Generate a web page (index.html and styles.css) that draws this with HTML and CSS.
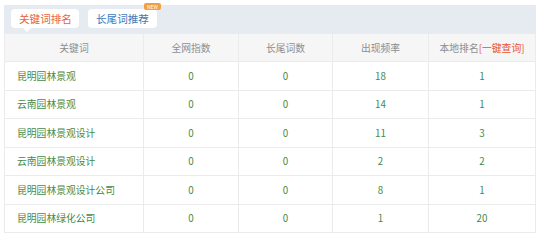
FILE: index.html
```html
<!DOCTYPE html>
<html lang="zh">
<head>
<meta charset="utf-8">
<link rel="stylesheet" href="styles.css">
</head>
<body>
<div class="panel">
  <div class="tabs">
    <span class="tab active">关键词排名</span>
    <span class="tab blue">长尾词推荐<span class="badge">NEW</span></span>
  </div>
  <table class="grid">
    <thead>
      <tr>
        <th class="c1">关键词</th>
        <th class="c2">全网指数</th>
        <th class="c3">长尾词数</th>
        <th class="c4">出现频率</th>
        <th class="c5">本地排名<span class="query">[一键查询]</span></th>
      </tr>
    </thead>
    <tbody>
      <tr><td class="kw">昆明园林景观</td><td>0</td><td>0</td><td>18</td><td>1</td></tr>
      <tr><td class="kw">云南园林景观</td><td>0</td><td>0</td><td>14</td><td>1</td></tr>
      <tr><td class="kw">昆明园林景观设计</td><td>0</td><td>0</td><td>11</td><td>3</td></tr>
      <tr><td class="kw">云南园林景观设计</td><td>0</td><td>0</td><td>2</td><td>2</td></tr>
      <tr><td class="kw">昆明园林景观设计公司</td><td>0</td><td>0</td><td>8</td><td>1</td></tr>
      <tr><td class="kw">昆明园林绿化公司</td><td>0</td><td>0</td><td>1</td><td>20</td></tr>
    </tbody>
  </table>
</div>
</body>
</html>
```
FILE: styles.css
```css
* { box-sizing: border-box; }
body {
  margin: 0;
  background: #fff;
  font-family: "Noto Sans CJK SC", "Noto Sans", sans-serif;
  font-size: 9.8px;
}
.panel {
  padding: 5px 5px 0 4px;
}
.tabs {
  background: #e6eaf1;
  height: 28px;
  display: flex;
  align-items: flex-start;
  gap: 9px;
  padding: 4px 0 0 7px;
}
.tab {
  position: relative;
  background: #fff;
  height: 19px;
  line-height: 19px;
  padding: 0 7px 0 8px;
  border-radius: 4px;
  font-size: 10.6px;
}
.tab.active { color: #e9623c; }
.tab.active::after {
  content: "";
  position: absolute;
  left: 12px;
  bottom: -4px;
  border-left: 4px solid transparent;
  border-right: 4px solid transparent;
  border-top: 4px solid #fff;
}
.tab.blue { color: #3b79b8; padding: 0 8px; }
.badge {
  position: absolute;
  right: -4px;
  top: -6px;
  background: #f0a043;
  color: #fff;
  font-size: 5px;
  line-height: 7px;
  height: 7px;
  padding: 0 3px;
  border-radius: 2px;
}
.grid {
  width: 532px;
  border-collapse: collapse;
  table-layout: fixed;
  border: 1px solid #ebebeb;
}
.grid th, .grid td {
  border: 1px solid #ebebeb;
  text-align: center;
  font-weight: normal;
  padding: 0;
}
.grid th {
  background: #f6f6f6;
  color: #8e8e8e;
  height: 28px;
}
.grid td {
  height: 28.5px;
  color: #478a47;
}
.grid td.kw {
  text-align: left;
  padding-left: 12px;
}
.c1 { width: 139px; }
.c2 { width: 95px; }
.c3 { width: 94px; }
.c4 { width: 96px; }
.query { color: #e8522d; }
```
